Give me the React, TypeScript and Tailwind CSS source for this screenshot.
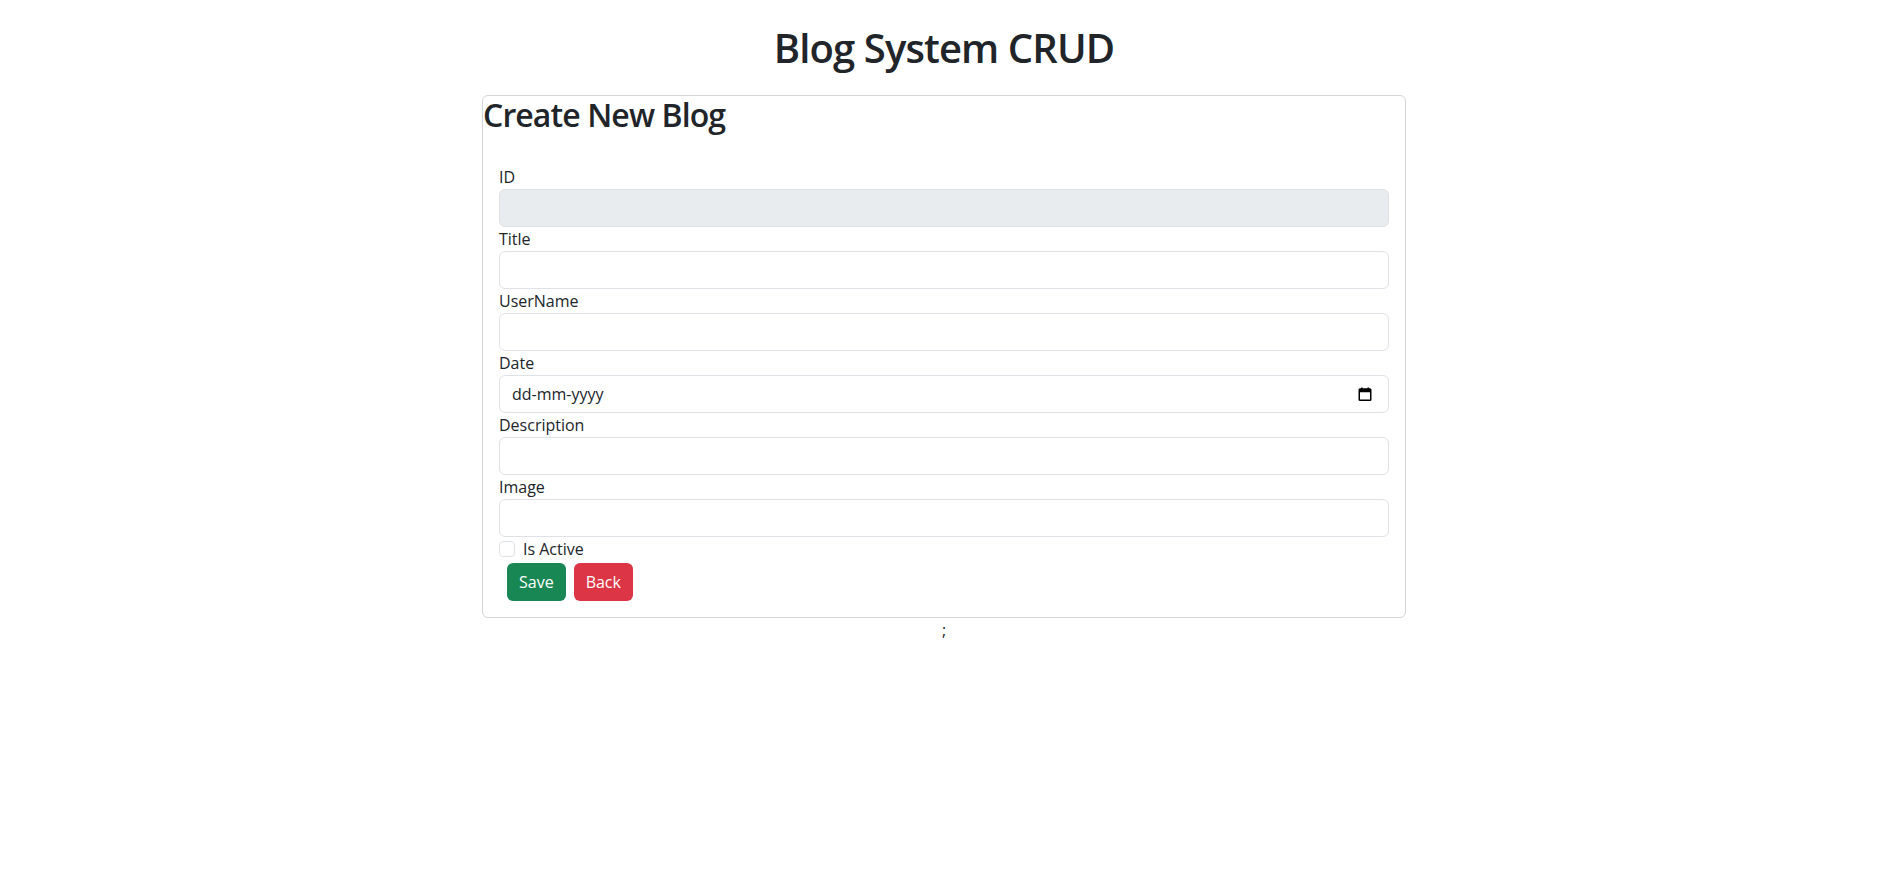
import { useState } from 'react'

const font = { fontFamily: '"Open Sans", "Noto Sans", sans-serif' }

function CalendarIcon() {
  return (
    <svg width="14" height="14" viewBox="0 0 14 14" className="pointer-events-none">
      <rect x="1.25" y="2" width="11.5" height="11.25" rx="0.75" fill="none" stroke="#000" strokeWidth="1.5" />
      <rect x="1" y="2" width="12" height="3.25" fill="#000" />
      <rect x="3" y="0.5" width="1.5" height="2" fill="#000" />
      <rect x="9.5" y="0.5" width="1.5" height="2" fill="#000" />
    </svg>
  )
}

const inputCls =
  'block w-full h-[38px] rounded-[6px] border border-[#dee2e6] px-3 text-base text-[#212529] outline-none'

function Field({ label, children }: { label: string; children: React.ReactNode }) {
  return (
    <div>
      <label className="block text-base leading-6 text-[#212529]">{label}</label>
      {children}
    </div>
  )
}

export default function App() {
  const [active, setActive] = useState(false)

  return (
    <div className="min-h-screen bg-white text-[#212529]" style={font}>
      <div className="w-[1888px] flex flex-col items-center">
        <h1 className="mt-[24px] mb-2 text-[40px] leading-[48px] font-semibold tracking-[-0.9px] text-center">
          Blog System CRUD
        </h1>

        <div className="mt-[15px] w-[924px] rounded-[6px] border border-[#d3d4d5] bg-white">
          <h2 className="mb-2 text-[32px] leading-[38.4px] font-semibold tracking-[-0.9px]">Create New Blog</h2>

          <form className="px-4 pt-[23px] pb-4" onSubmit={(e) => e.preventDefault()}>
            <Field label="ID">
              <input className={inputCls + ' bg-[#e9ecef]'} disabled />
            </Field>
            <Field label="Title">
              <input className={inputCls + ' bg-white'} />
            </Field>
            <Field label="UserName">
              <input className={inputCls + ' bg-white'} />
            </Field>
            <Field label="Date">
              <div className="relative">
                <input className={inputCls + ' bg-white placeholder:text-[#212529]'} placeholder="dd-mm-yyyy" />
                <span className="absolute right-[17px] top-[12px] flex">
                  <CalendarIcon />
                </span>
              </div>
            </Field>
            <Field label="Description">
              <input className={inputCls + ' bg-white'} />
            </Field>
            <Field label="Image">
              <input className={inputCls + ' bg-white'} />
            </Field>

            <div className="flex items-start h-6">
              <input
                type="checkbox"
                checked={active}
                onChange={(e) => setActive(e.target.checked)}
                className="mt-1 h-4 w-4 appearance-none rounded-[4px] border border-[#dee2e6] bg-white checked:bg-[#0d6efd] checked:border-[#0d6efd]"
              />
              <span className="ml-2 text-base leading-6">Is Active</span>
            </div>

            <div className="mt-[2px] flex">
              <button type="submit" className="ml-2 h-[38px] rounded-[6px] bg-[#198754] px-3 text-base text-white">
                Save
              </button>
              <button type="button" className="ml-2 h-[38px] rounded-[6px] bg-[#dc3545] px-3 text-base text-white">
                Back
              </button>
            </div>
          </form>
        </div>

        <div className="text-base leading-6">;</div>
      </div>
    </div>
  )
}
